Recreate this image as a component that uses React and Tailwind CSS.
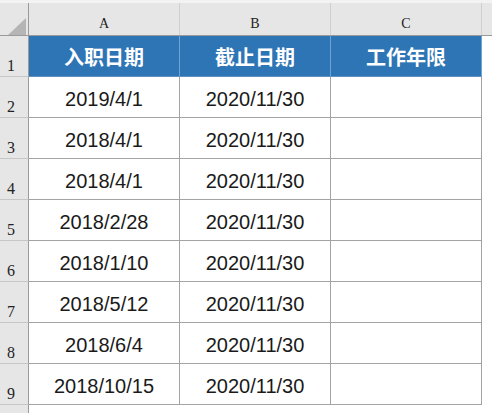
import React from "react";

const rows = [
  ["2019/4/1", "2020/11/30"],
  ["2018/4/1", "2020/11/30"],
  ["2018/4/1", "2020/11/30"],
  ["2018/2/28", "2020/11/30"],
  ["2018/1/10", "2020/11/30"],
  ["2018/5/12", "2020/11/30"],
  ["2018/6/4", "2020/11/30"],
  ["2018/10/15", "2020/11/30"],
];

function RowHead({ n, h = "h-[41px]" }) {
  return (
    <div
      className={`${h} w-[29px] shrink-0 bg-[#e6e6e6] border-r border-r-[#9a9a9a] border-b border-b-[#c6c6c6] flex items-end pl-[7px] pb-[2px] text-[16px] leading-none text-[#222] font-['Liberation_Serif',serif]`}
    >
      {n}
    </div>
  );
}

export default function App() {
  return (
    <div className="w-[492px] h-[413px] overflow-hidden bg-white font-['Liberation_Sans','Noto_Sans_CJK_SC',sans-serif]">
      {/* column header */}
      <div className="flex h-[36px] bg-[#e6e6e6] border-t-[3px] border-t-[#f3f3f3] border-b border-b-[#9a9a9a]">
        <div className="w-[29px] shrink-0 border-r border-r-[#9a9a9a] relative">
          <svg className="absolute left-[8px] top-[15px]" width="18" height="17" viewBox="0 0 18 17">
            <polygon points="18,0 18,17 0,17" fill="#b5b5b5" />
          </svg>
        </div>
        {["A", "B", "C"].map((c) => (
          <div
            key={c}
            className="w-[151px] shrink-0 border-r border-r-[#cfcfcf] flex items-end justify-center pb-[1px] text-[14px] text-[#222] font-['Liberation_Serif',serif]"
          >
            {c}
          </div>
        ))}
        <div className="flex-1" />
      </div>

      {/* row 1 header */}
      <div className="flex">
        <RowHead n="1" />
        {["入职日期", "截止日期", "工作年限"].map((t) => (
          <div
            key={t}
            className="w-[151px] h-[41px] shrink-0 bg-[#2e75b6] border-r border-r-[#6fa3d6] border-b border-b-[#5f90c0] flex items-center justify-center pt-[1px] text-white font-bold text-[20px] font-['Noto_Sans_CJK_SC',sans-serif]"
          >
            {t}
          </div>
        ))}
        <div className="flex-1" />
      </div>

      {rows.map((r, i) => (
        <div key={i} className="flex">
          <RowHead n={String(i + 2)} />
          <div className="w-[151px] h-[41px] shrink-0 border-r border-b border-[#a3a3a3] flex items-center justify-center pt-[3px] text-[20px] text-[#1a1a1a]">
            {r[0]}
          </div>
          <div className="w-[151px] h-[41px] shrink-0 border-r border-b border-[#a3a3a3] flex items-center justify-center pt-[3px] text-[20px] text-[#1a1a1a]">
            {r[1]}
          </div>
          <div className="w-[151px] h-[41px] shrink-0 border-r border-b border-[#a3a3a3]" />
          <div className="flex-1" />
        </div>
      ))}

      <div className="flex">
        <RowHead n="" h="h-[20px]" />
        <div className="flex-1" />
      </div>
    </div>
  );
}
